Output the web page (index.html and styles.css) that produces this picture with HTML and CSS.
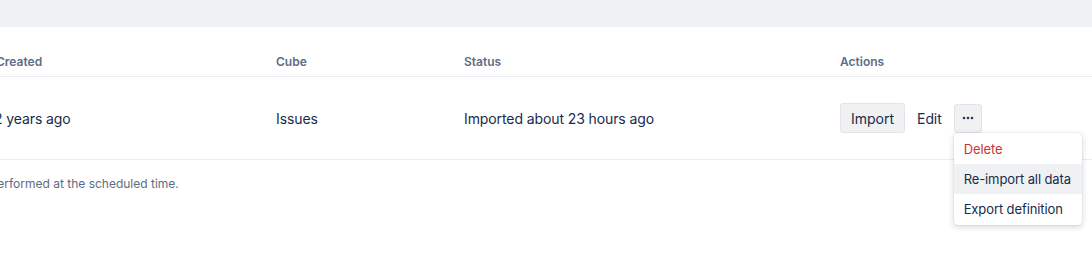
FILE: index.html
```html
<!DOCTYPE html>
<html lang="en">
<head>
  <meta charset="UTF-8">
  <title>Imports</title>
  <link rel="stylesheet" href="styles.css">
</head>
<body>
  <div class="topbar"></div>

  <div class="imports">
    <div class="row head">
      <div>Created</div>
      <div>Cube</div>
      <div>Status</div>
      <div>Actions</div>
    </div>

    <div class="row item">
      <div>2 years ago</div>
      <div>Issues</div>
      <div>Imported about 23 hours ago</div>
      <div class="actions">
        <button class="btn">Import</button>
        <span class="link">Edit</span>
        <div class="more-wrap">
          <button class="more" aria-label="More">
            <svg width="12" height="4" viewBox="0 0 12 4"><circle cx="2" cy="2" r="1.3"/><circle cx="6" cy="2" r="1.3"/><circle cx="10" cy="2" r="1.3"/></svg>
          </button>
          <ul class="menu">
            <li class="danger">Delete</li>
            <li class="active">Re-import all data</li>
            <li>Export definition</li>
          </ul>
        </div>
      </div>
    </div>

    <p class="note">Imports are performed at the scheduled time.</p>
  </div>
</body>
</html>
```

FILE: styles.css
```css
body{
  margin: 0;
  min-height: 100vh;
  font-family: Inter, "Noto Sans", sans-serif;
  color: #172b4d;
  background: #fff;
}

.topbar{
  height: 27px;
  background-color: #f0f1f3;
}

.imports{
  margin-left: -4px;
}

.row{
  display: grid;
  grid-template-columns: 280px 188px 376px 1fr;
  align-items: center;
  border-bottom: 1px solid #ebecf0;
}

.row.head{
  height: 50px;
  padding-top: 20px;
  box-sizing: border-box;
  font-size: 12px;
  font-weight: 600;
  color: #5e6c84;
}

.row.item{
  height: 82px;
  font-size: 14px;
  letter-spacing: -0.1px;
}

.row.item > div:first-child{
  margin-left: -2px;
}

.actions{
  display: flex;
  align-items: center;
  gap: 12px;
}

.btn{
  font: inherit;
  color: inherit;
  background: #f0f1f3;
  border: 1px solid #e2e4e9;
  border-radius: 3px;
  height: 30px;
  padding: 0 10px;
}

.more-wrap{
  position: relative;
}

.more{
  display: flex;
  align-items: center;
  justify-content: center;
  background: #f0f1f3;
  border: 1px solid #e2e4e9;
  border-radius: 3px;
  width: 28px;
  height: 29px;
  padding: 0;
  fill: #253858;
}

.menu{
  position: absolute;
  top: 29px;
  left: 0;
  width: 128px;
  margin: 0;
  padding: 1px 0;
  list-style: none;
  background: #fff;
  border-radius: 4px;
  box-shadow: 0 2px 6px rgba(9, 30, 66, .18), 0 0 1px rgba(9, 30, 66, .25);
  font-size: 13px;
  z-index: 2;
}

.menu li{
  height: 30px;
  line-height: 30px;
  padding: 0 10px;
  white-space: nowrap;
}

.menu li.danger{ color: #c9372c; }
.menu li.active{ background: #f0f1f3; }

.note{
  margin: 16px 0 0;
  font-size: 12px;
  color: #5e6c84;
  text-indent: -74px;
}
```
